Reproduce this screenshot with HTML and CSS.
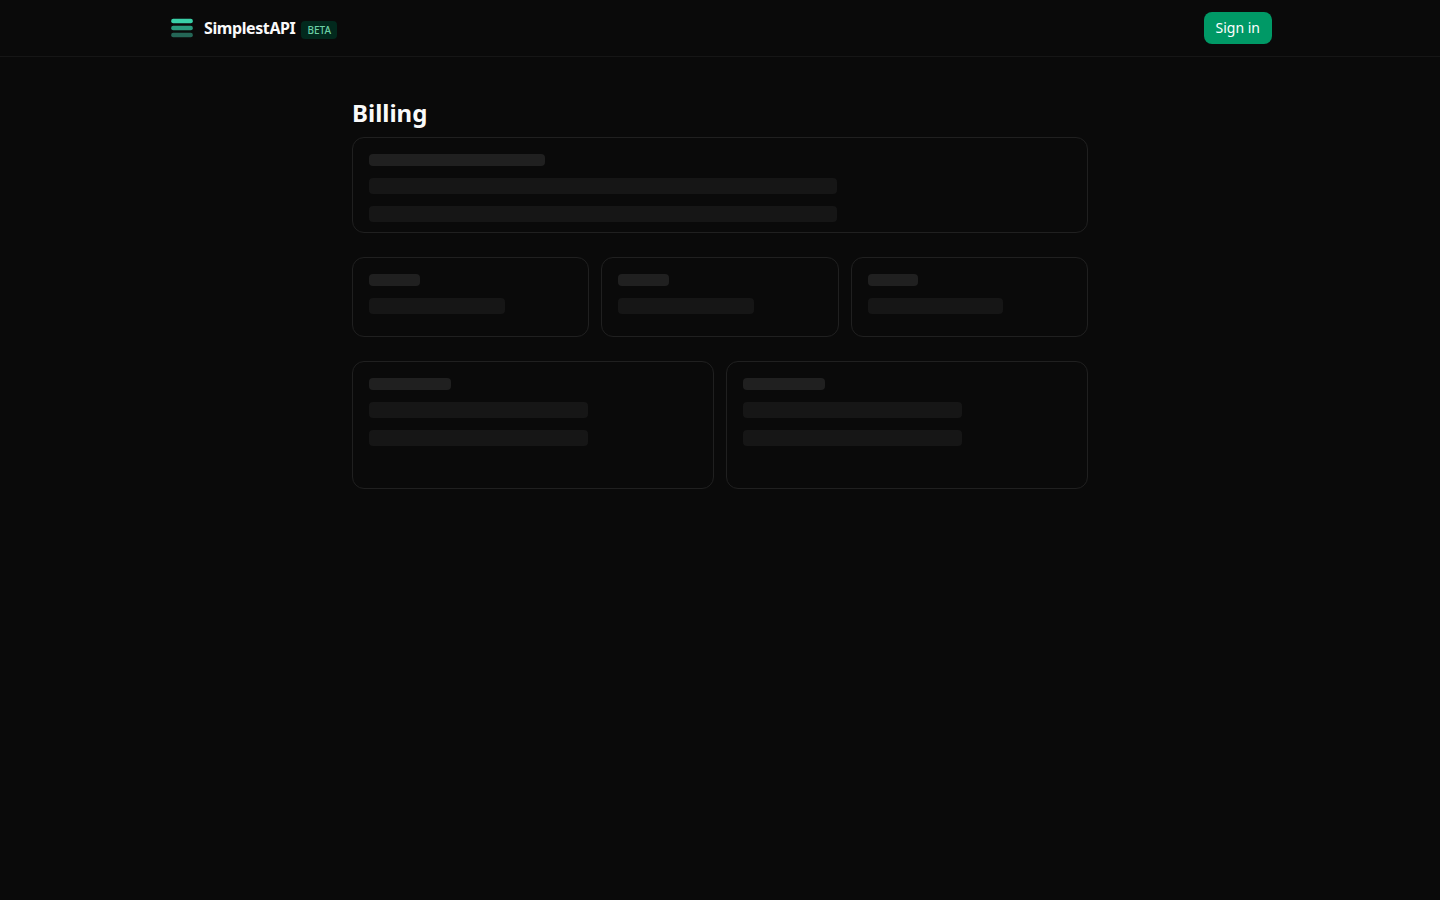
FILE: index.html
```html
<!DOCTYPE html>
<html lang="en">
<head>
  <meta charset="utf-8">
  <meta name="viewport" content="width=device-width, initial-scale=1">
  <title>Billing – SimplestAPI</title>
  <link rel="stylesheet" href="styles.css">
</head>
<body>
  <header class="header">
    <div class="header-inner">
      <a class="brand" href="#">
        <svg class="logo" viewBox="0 0 28 28" aria-hidden="true">
          <rect x="3.200" y="4.700" width="21.600" height="4.600" rx="2" fill="#3ad0a8"/>
          <rect x="3.200" y="11.700" width="21.600" height="4.600" rx="2" fill="#2a9b7e"/>
          <rect x="3.200" y="18.700" width="21.600" height="4.600" rx="2" fill="#246656"/>
        </svg>
        <span class="brand-text">
          <span class="brand-name">SimplestAPI</span>
          <span class="badge">BETA</span>
        </span>
      </a>
      <button class="sign-in" type="button">Sign in</button>
    </div>
  </header>
  <main class="main">
    <h1 class="title">Billing</h1>
    <div class="sections" aria-busy="true">
      <div class="card card-summary">
        <div class="bar bar-title"></div>
        <div class="bar"></div>
        <div class="bar"></div>
      </div>
      <div class="row">
        <div class="card card-stat"><div class="bar bar-title"></div><div class="bar"></div></div>
        <div class="card card-stat"><div class="bar bar-title"></div><div class="bar"></div></div>
        <div class="card card-stat"><div class="bar bar-title"></div><div class="bar"></div></div>
      </div>
      <div class="row">
        <div class="card card-detail"><div class="bar bar-title"></div><div class="bar"></div><div class="bar"></div></div>
        <div class="card card-detail"><div class="bar bar-title"></div><div class="bar"></div><div class="bar"></div></div>
      </div>
    </div>
  </main>
</body>
</html>
```
FILE: styles.css
```css
* {
  box-sizing: border-box;
}

body {
  margin: 0;
  min-height: 100vh;
  background: #0a0a0a;
  color: #fafafa;
  font-family: "Noto Sans", sans-serif;
  font-size: 14px;
  line-height: 20px;
}

.header {
  border-bottom: 1px solid #161616;
}

.header-inner {
  display: flex;
  align-items: center;
  justify-content: space-between;
  max-width: 1152px;
  margin: 0 auto;
  padding: 12px 24px;
}

.brand {
  display: flex;
  align-items: center;
  gap: 8px;
  color: inherit;
  text-decoration: none;
}

.logo {
  width: 28px;
  height: 28px;
}

.brand-text {
  display: flex;
  align-items: center;
  gap: 6px;
}

.brand-name {
  font-size: 16px;
  font-weight: 700;
  line-height: 24px;
  letter-spacing: -0.025em;
}

.badge {
  margin-top: 4px;
  padding: 1px 6px;
  border-radius: 4px;
  background: #02291d;
  color: #6bd0a5;
  font-size: 10px;
  font-weight: 500;
  line-height: 16px;
}

.sign-in {
  padding: 6px 12px;
  border: 0;
  border-radius: 8px;
  background: #009966;
  color: #fff;
  font: inherit;
  cursor: pointer;
}

.main {
  max-width: 768px;
  margin: 0 auto;
  padding: 40px 16px;
}

.title {
  margin: 0 0 8px;
  font-size: 24px;
  font-weight: 700;
  line-height: 32px;
}

.sections {
  display: grid;
  gap: 24px;
}

.row {
  display: grid;
  grid-auto-columns: 1fr;
  grid-auto-flow: column;
  gap: 12px;
}

.card {
  display: flex;
  flex-direction: column;
  gap: 12px;
  padding: 16px;
  border: 1px solid #202020;
  border-radius: 12px;
}

.card-summary {
  height: 96px;
}

.card-stat {
  height: 80px;
}

.card-detail {
  height: 128px;
}

.bar {
  flex: none;
  width: 66.6667%;
  height: 16px;
  border-radius: 4px;
  background: #161616;
}

.bar-title {
  width: 25%;
  height: 12px;
  background: #202020;
}
```
